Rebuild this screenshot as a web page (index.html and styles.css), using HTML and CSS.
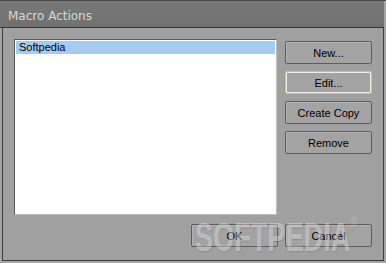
FILE: index.html
```html
<!DOCTYPE html>
<html lang="en">
<head>
    <meta charset="UTF-8">
    <title>Macro Actions</title>
    <link rel="stylesheet" href="styles.css">
</head>
<body>
    <div class="window">
        <div class="titlebar">Macro Actions</div>
        <div class="client">
            <div class="main">
                <div class="listbox">
                    <div class="item selected">Softpedia</div>
                </div>
                <div class="side">
                    <button class="btn">New...</button>
                    <button class="btn focused">Edit...</button>
                    <button class="btn">Create Copy</button>
                    <button class="btn">Remove</button>
                </div>
            </div>
            <div class="footer">
                <button class="btn">OK</button>
                <button class="btn">Cancel</button>
            </div>
            <div class="watermark">SOFTPEDIA<sup>®</sup></div>
        </div>
    </div>
</body>
</html>
```

FILE: styles.css
```css
body {
    margin: 0;
    font-family: "Liberation Sans", Arial, sans-serif;
    font-size: 12px;
    background: #a0a0a0;
}
.window {
    width: 386px;
    height: 263px;
    display: flex;
    flex-direction: column;
    background: #a4a4a4;
    box-sizing: border-box;
    border-top: 1px solid #4a4a4a;
}
.titlebar {
    height: 27px;
    box-sizing: border-box;
    padding: 8px 0 0 8px;
    background: linear-gradient(#787878, #717171);
    color: #d8d8d8;
    font-family: "DejaVu Sans", sans-serif;
    font-size: 12px;
    border-bottom: 1px solid #3a3a3a;
    margin: 0 2px 0 0;
}
.client {
    position: relative;
    flex: 1;
    margin: 0 2px 2px 2px;
    border-left: 1px solid #3e3e3e;
    border-right: 1px solid #3e3e3e;
    border-bottom: 1px solid #3e3e3e;
    background: #a0a0a0;
    padding: 11px 11px 0 11px;
    display: flex;
    flex-direction: column;
}
.main {
    display: flex;
    gap: 8px;
}
.listbox {
    width: 263px;
    height: 176px;
    box-sizing: border-box;
    background: #fff;
    border-top: 1px solid #5a5a5a;
    border-left: 1px solid #5a5a5a;
    border-right: 1px solid #bdbdbd;
    border-bottom: 1px solid #bdbdbd;
    padding: 1px 1px;
}
.item {
    height: 13px;
    line-height: 13px;
    padding-left: 3px;
    color: #000;
    font-size: 11px;
}
.item.selected {
    background: #a6caf0;
}
.side {
    display: flex;
    flex-direction: column;
    gap: 7px;
    padding-top: 2px;
}
.btn {
    width: 87px;
    height: 23px;
    box-sizing: border-box;
    background: #a3a3a3;
    border: 1px solid #5c5c5c;
    border-radius: 2px;
    box-shadow: inset 1px 1px 0 #b4b4b4;
    font-family: "Liberation Sans", Arial, sans-serif;
    font-size: 11px;
    color: #000;
    padding: 0;
}
.btn.focused {
    border: 1px solid #f0c030;
    box-shadow: inset 0 0 0 1px #eeeeee;
}
.footer {
    display: flex;
    justify-content: flex-end;
    gap: 7px;
    margin-top: 9px;
}
.watermark {
    position: absolute;
    left: 192px;
    top: 187px;
    font-weight: bold;
    font-size: 40px;
    transform: scaleX(0.68);
    transform-origin: left top;
    color: rgba(255, 255, 255, 0.4);
    text-shadow: 1px 1px 1px rgba(0, 0, 0, 0.12);
    pointer-events: none;
}
.watermark sup {
    font-size: 13px;
    font-weight: normal;
    vertical-align: top;
}
```
